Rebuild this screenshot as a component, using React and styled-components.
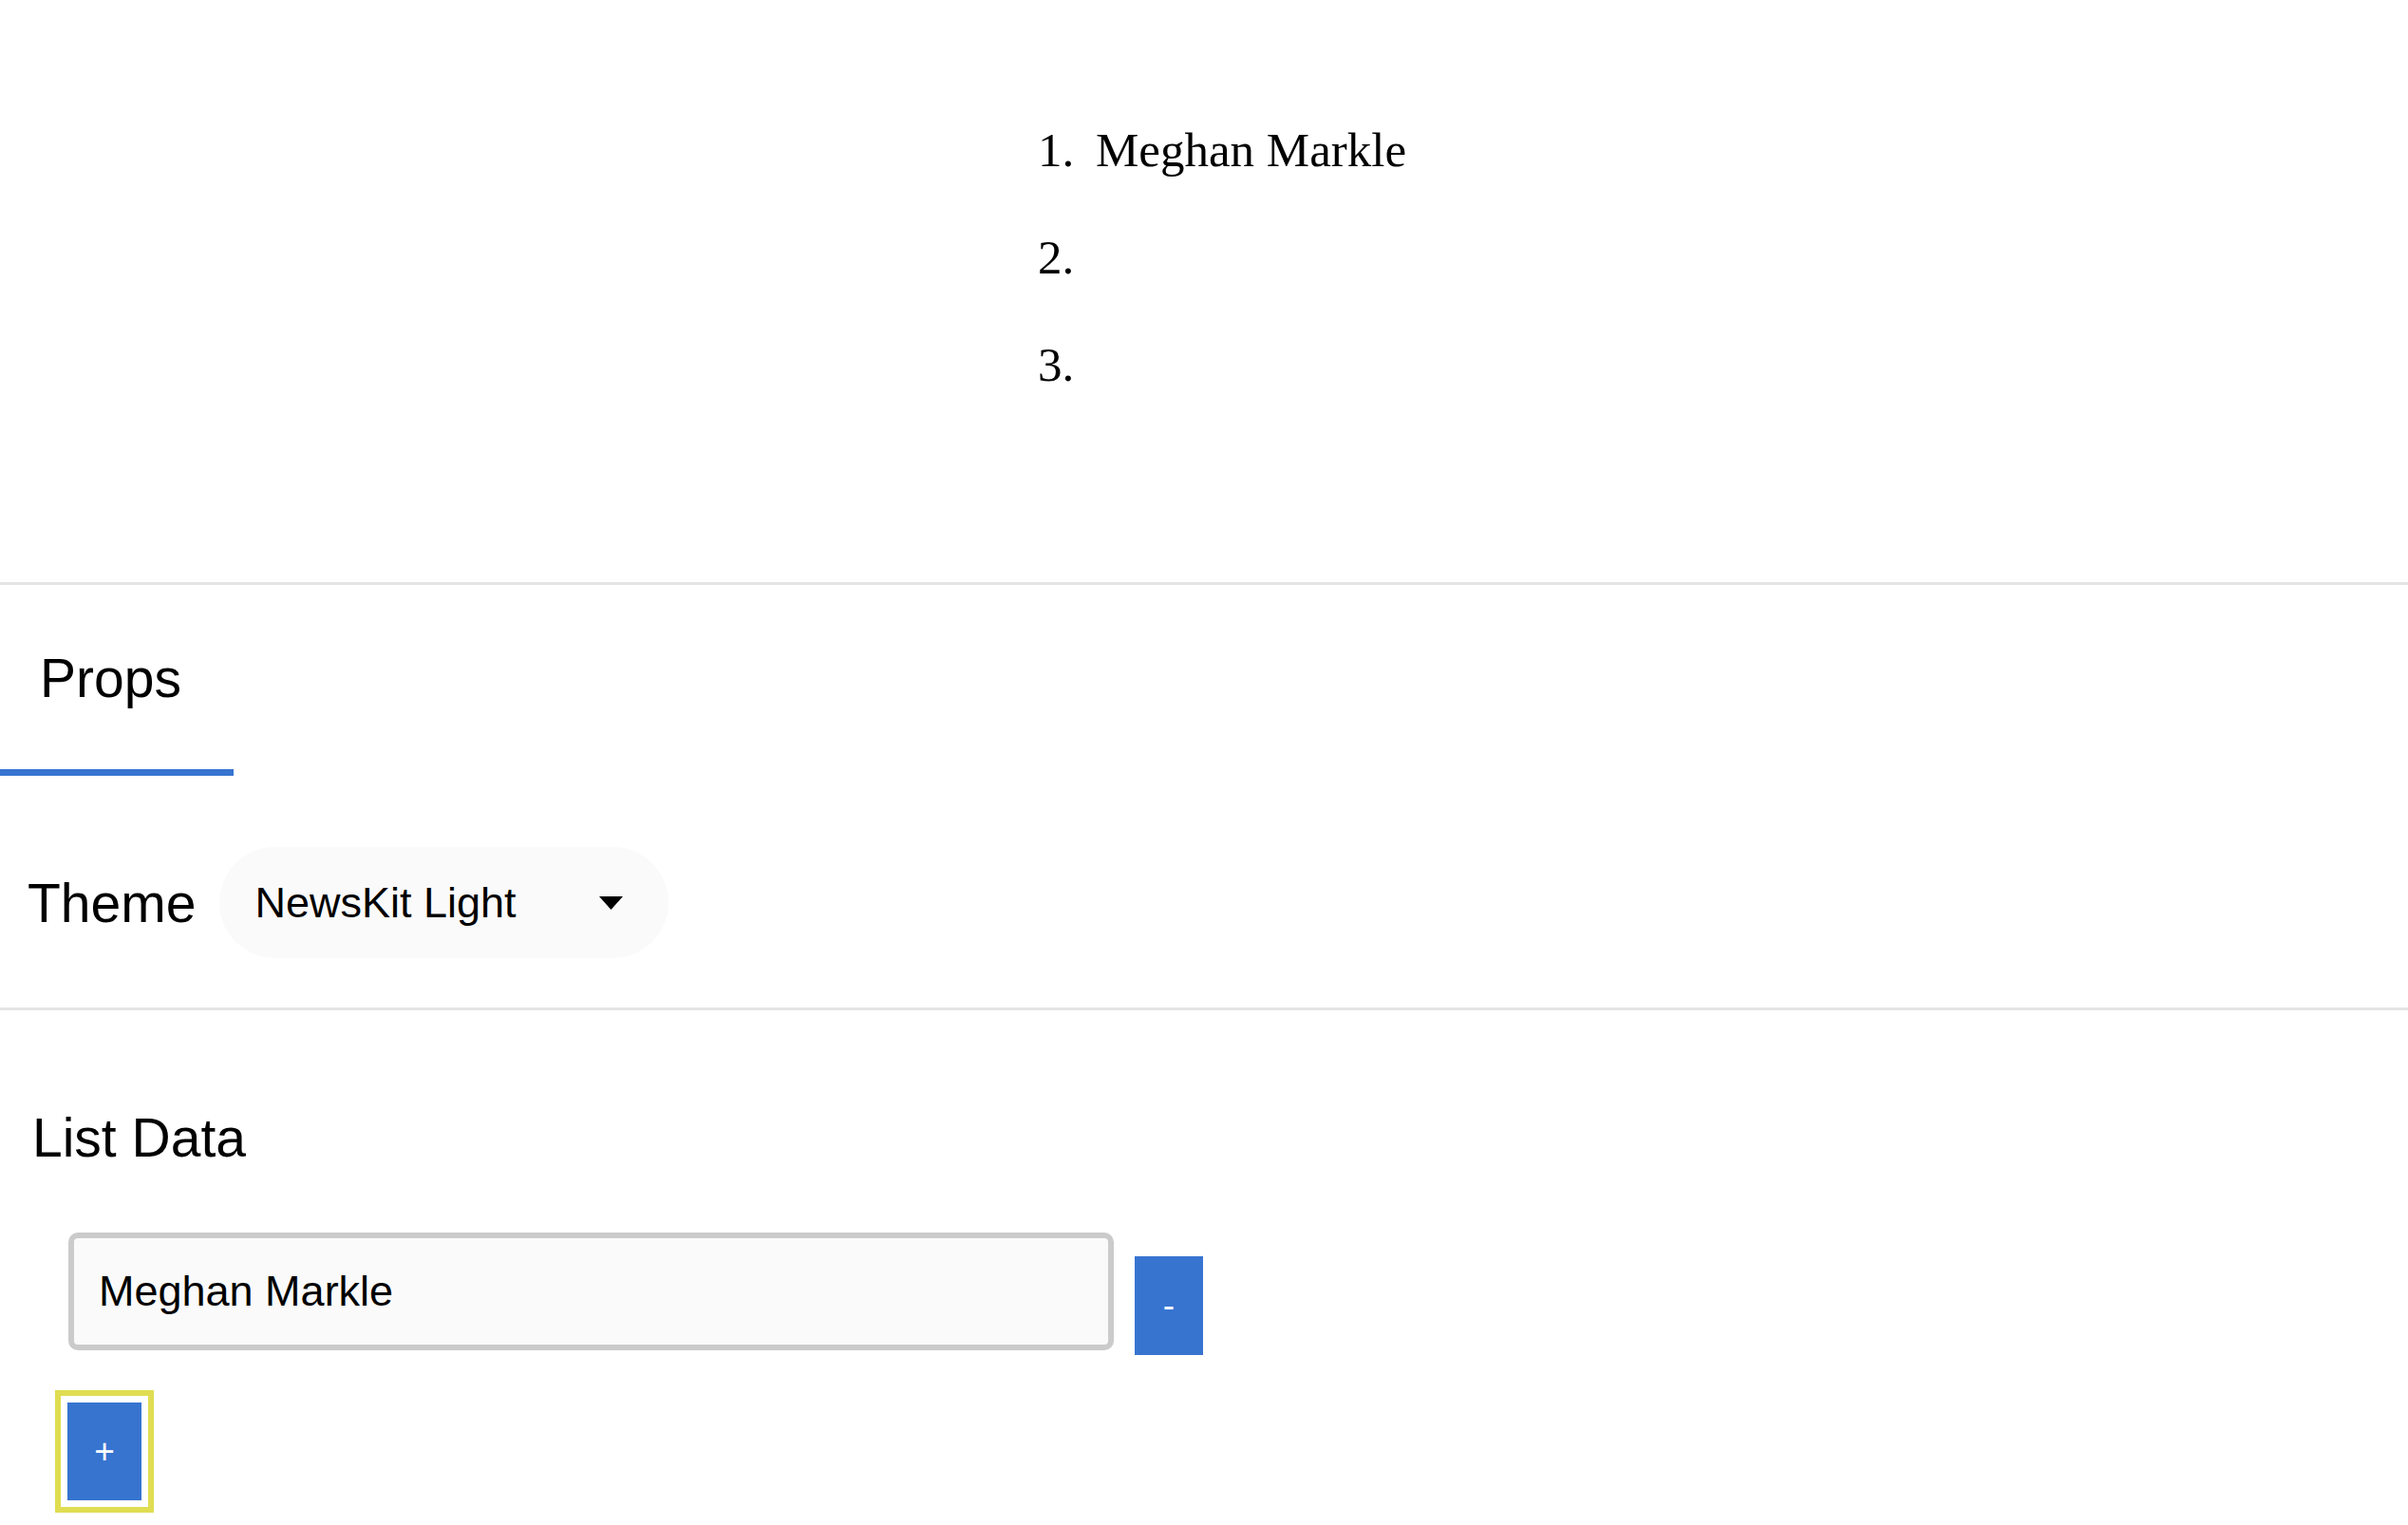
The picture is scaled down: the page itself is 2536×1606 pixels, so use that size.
import React from "react";
import styled, { createGlobalStyle } from "styled-components";

const GlobalStyle = createGlobalStyle`
  body {
    margin: 0;
    background: #fff;
    font-family: "Liberation Sans", Arial, sans-serif;
    color: #000;
  }
`;

const Page = styled.div`
  width: 100%;
`;

const Preview = styled.section`
  height: 616px;
  box-sizing: border-box;
  border-bottom: 3px solid #e4e4e4;
  display: flex;
  justify-content: center;
  align-items: flex-start;
`;

const List = styled.ol`
  margin: 102px 12px 0 0;
  padding: 0 0 0 101px;
  font-family: "Liberation Serif", "Times New Roman", serif;
  font-size: 51px;
  line-height: 113px;
`;

const ListItem = styled.li`
  min-height: 113px;
  padding-left: 10px;
`;

const TabBar = styled.div`
  display: flex;
`;

const Tab = styled.button`
  width: 246px;
  margin: 0;
  padding: 65px 0 63px 42px;
  border: none;
  border-bottom: 7px solid ${props => (props.current ? "#3774d0" : "transparent")};
  background: transparent;
  font-family: "Liberation Sans", Arial, sans-serif;
  font-size: 57px;
  color: #000;
  text-align: left;
`;

const ThemeRow = styled.div`
  display: flex;
  align-items: center;
  gap: 25px;
  padding: 75px 0 52px 29px;
  border-bottom: 3px solid #e4e4e4;
`;

const Label = styled.span`
  font-size: 57px;
`;

const Select = styled.div`
  width: 473px;
  height: 117px;
  box-sizing: border-box;
  padding: 0 48px 0 37px;
  border-radius: 59px;
  background: #fafafa;
  display: flex;
  align-items: center;
  justify-content: space-between;
  font-size: 45px;
`;

const DataSection = styled.div`
  padding: 101px 0 20px;
`;

const Heading = styled.h3`
  margin: 0 0 67px 34px;
  font-size: 57px;
  font-weight: normal;
`;

const InputRow = styled.div`
  display: flex;
  align-items: flex-start;
  gap: 22px;
  padding-left: 72px;
`;

const TextInput = styled.input`
  width: 1101px;
  height: 124px;
  box-sizing: border-box;
  padding: 0 0 0 26px;
  border: 6px solid #cbcbcb;
  border-radius: 10px;
  background: #fafafa;
  font-family: "Liberation Sans", Arial, sans-serif;
  font-size: 45px;
  color: #000;
`;

const Square = styled.button`
  width: ${props => props.w}px;
  height: ${props => props.h}px;
  margin: ${props => props.m};
  padding: 0;
  border: none;
  background: #3774d0;
  color: #fff;
  font-family: "Liberation Sans", Arial, sans-serif;
  font-size: 37px;
  outline: ${props => (props.focused ? "6px solid #e0dd52" : "none")};
  outline-offset: 7px;
`;

const Caret = () => (
  <svg width="25" height="14" viewBox="0 0 25 14">
    <path d="M0 0 L25 0 L12.5 14 Z" fill="#000" />
  </svg>
);

const App = () => {
  return (
    <Page>
      <GlobalStyle />
      <Preview>
        <List>
          <ListItem>Meghan Markle</ListItem>
          <ListItem />
          <ListItem />
        </List>
      </Preview>
      <TabBar>
        <Tab current>Props</Tab>
      </TabBar>
      <ThemeRow>
        <Label>Theme</Label>
        <Select>
          <span>NewsKit Light</span>
          <Caret />
        </Select>
      </ThemeRow>
      <DataSection>
        <Heading>List Data</Heading>
        <InputRow>
          <TextInput defaultValue="Meghan Markle" />
          <Square w={72} h={104} m="25px 0 0">-</Square>
        </InputRow>
        <Square w={78} h={103} m="50px 0 0 71px" focused>+</Square>
      </DataSection>
    </Page>
  );
};

export default App;
